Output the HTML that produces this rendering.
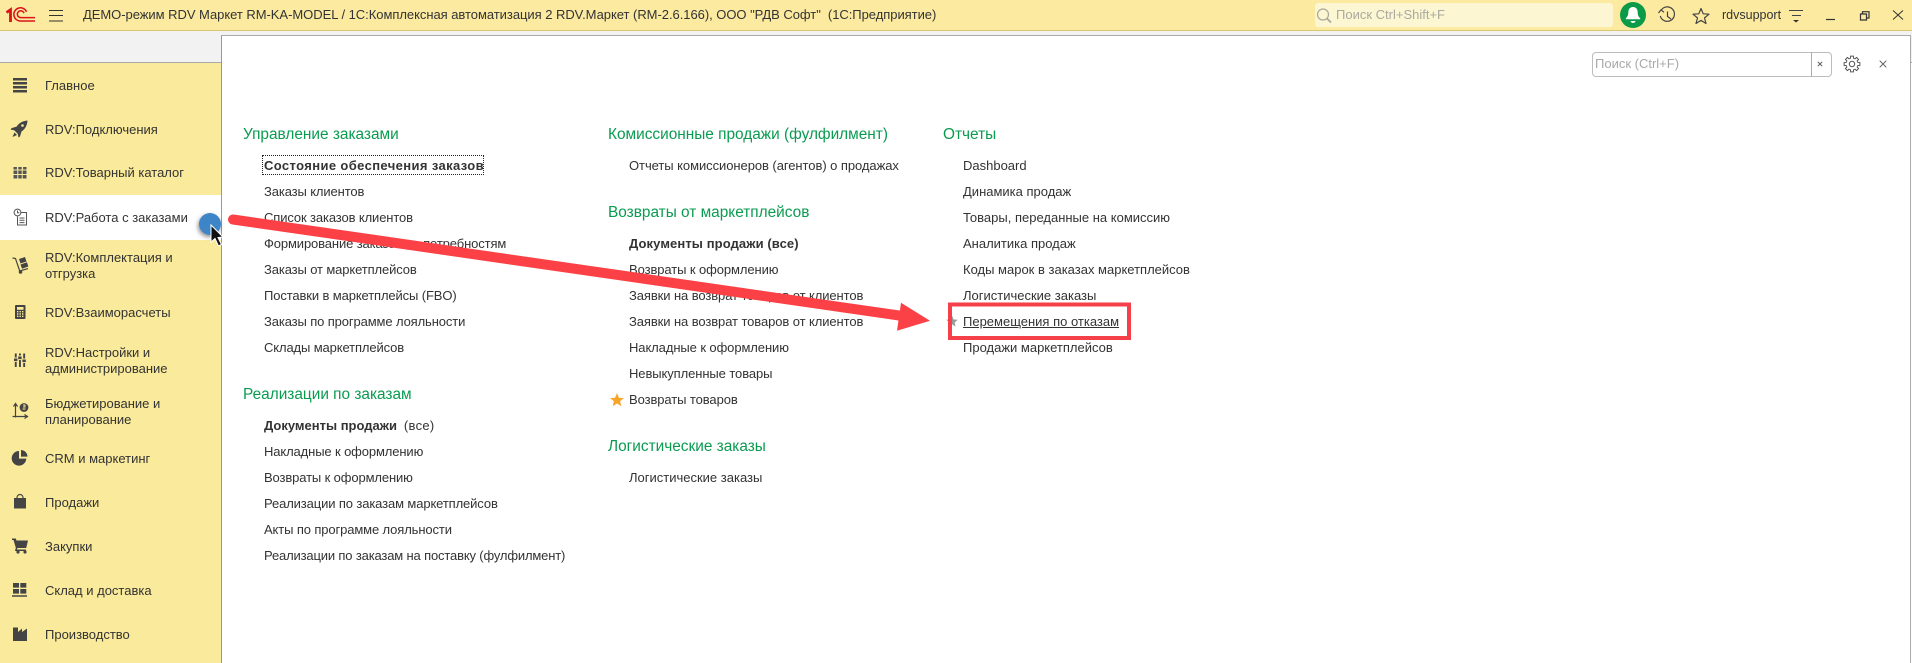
<!DOCTYPE html>
<html lang="ru"><head><meta charset="utf-8"><title>1С</title>
<style>
html,body{margin:0;padding:0;background:#fff}
#r{position:relative;width:1912px;height:663px;overflow:hidden;background:#fff;font-family:"Liberation Sans","Noto Sans CJK SC",sans-serif;font-size:13px;color:#333}
#r div{position:absolute}
.t{position:absolute;height:16px;line-height:16px;white-space:pre}
.h{position:absolute;height:20px;line-height:20px;font-size:15.4px;color:#0a9b50;white-space:pre}
.c1{letter-spacing:-.12px}
.c2{letter-spacing:-.09px}
b{font-weight:bold}
svg{position:absolute;left:0;top:0}
</style></head><body><div id="r">
<div style="left:0;top:0;width:1912px;height:30px;background:#fbea9f;border-bottom:1px solid #d8c76e"></div>
<div style="left:0;top:31px;width:1912px;height:31px;background:#f2f2f2"></div>
<div style="left:0;top:62px;width:221px;height:1px;background:#a8a8a8"></div>
<div style="left:0;top:63px;width:221px;height:600px;background:#faea9b"></div>
<div style="left:0;top:195px;width:221px;height:45px;background:#fff"></div>
<div style="left:221px;top:35px;width:1688px;height:628px;background:#fff;border-left:1px solid #999;border-top:1px solid #aaa;border-right:1px solid #aaa"></div>
<div style="left:1911px;top:62px;width:1px;height:1px;background:#aaa"></div>
<div style="left:1315px;top:3px;width:298px;height:24px;background:#fdf6d2;border-radius:3px"></div>
<div style="left:1592px;top:52px;width:238px;height:23px;border:1px solid #bdbdbd;border-radius:4px;background:#fff"></div>
<div style="left:1811px;top:52px;width:1px;height:25px;background:#adadad"></div>
<div style="left:262px;top:155px;width:220px;height:18px;border:1px dotted #222"></div>

<span class="t" style="left:83px;top:7px;letter-spacing:-.04px">ДЕМО-режим RDV Маркет RM-KA-MODEL / 1С:Комплексная автоматизация 2 RDV.Маркет (RM-2.6.166), ООО "РДВ Софт"  (1С:Предприятие)</span>
<span class="t" style="left:1336px;top:7px;color:#a9a9a0">Поиск Ctrl+Shift+F</span>
<span class="t" style="left:1722px;top:7px;font-size:12.5px">rdvsupport</span>
<span class="t" style="left:1595px;top:56px;color:#a9a9a9">Поиск (Ctrl+F)</span>

<span class="t" style="left:45px;top:78px">Главное</span>
<span class="t" style="left:45px;top:122px">RDV:Подключения</span>
<span class="t" style="left:45px;top:165px">RDV:Товарный каталог</span>
<span class="t" style="left:45px;top:210px">RDV:Работа с заказами</span>
<span class="t" style="left:45px;top:250px">RDV:Комплектация и</span>
<span class="t" style="left:45px;top:266px">отгрузка</span>
<span class="t" style="left:45px;top:305px">RDV:Взаиморасчеты</span>
<span class="t" style="left:45px;top:345px">RDV:Настройки и</span>
<span class="t" style="left:45px;top:361px">администрирование</span>
<span class="t" style="left:45px;top:396px">Бюджетирование и</span>
<span class="t" style="left:45px;top:412px">планирование</span>
<span class="t" style="left:45px;top:451px">CRM и маркетинг</span>
<span class="t" style="left:45px;top:495px">Продажи</span>
<span class="t" style="left:45px;top:539px">Закупки</span>
<span class="t" style="left:45px;top:583px">Склад и доставка</span>
<span class="t" style="left:45px;top:627px">Производство</span>

<span class="h" style="left:243px;top:125px">Управление заказами</span>
<span class="t" style="left:264px;top:158px;letter-spacing:.38px"><b>Состояние обеспечения заказов</b></span>
<span class="t c1" style="left:264px;top:184px">Заказы клиентов</span>
<span class="t c1" style="left:264px;top:210px">Список заказов клиентов</span>
<span class="t c1" style="left:264px;top:236px">Формирование заказов по потребностям</span>
<span class="t c1" style="left:264px;top:262px">Заказы от маркетплейсов</span>
<span class="t c1" style="left:264px;top:288px">Поставки в маркетплейсы (FBO)</span>
<span class="t c1" style="left:264px;top:314px">Заказы по программе лояльности</span>
<span class="t c1" style="left:264px;top:340px">Склады маркетплейсов</span>
<span class="h" style="left:243px;top:385px">Реализации по заказам</span>
<span class="t" style="left:264px;top:418px"><b>Документы продажи</b><span style="margin-left:3px;letter-spacing:.3px"> (все)</span></span>
<span class="t c1" style="left:264px;top:444px">Накладные к оформлению</span>
<span class="t c1" style="left:264px;top:470px">Возвраты к оформлению</span>
<span class="t c1" style="left:264px;top:496px">Реализации по заказам маркетплейсов</span>
<span class="t c1" style="left:264px;top:522px">Акты по программе лояльности</span>
<span class="t" style="left:264px;top:548px;letter-spacing:-.16px">Реализации по заказам на поставку (фулфилмент)</span>

<span class="h" style="left:608px;top:125px">Комиссионные продажи (фулфилмент)</span>
<span class="t" style="left:629px;top:158px;letter-spacing:-.06px">Отчеты комиссионеров (агентов) о продажах</span>
<span class="h" style="left:608px;top:203px">Возвраты от маркетплейсов</span>
<span class="t" style="left:629px;top:236px;letter-spacing:.1px"><b>Документы продажи (все)</b></span>
<span class="t c2" style="left:629px;top:262px">Возвраты к оформлению</span>
<span class="t c2" style="left:629px;top:288px">Заявки на возврат товаров от клиентов</span>
<span class="t c2" style="left:629px;top:314px">Заявки на возврат товаров от клиентов</span>
<span class="t c2" style="left:629px;top:340px">Накладные к оформлению</span>
<span class="t c2" style="left:629px;top:366px">Невыкупленные товары</span>
<span class="t c2" style="left:629px;top:392px">Возвраты товаров</span>
<span class="h" style="left:608px;top:437px">Логистические заказы</span>
<span class="t" style="left:629px;top:470px">Логистические заказы</span>

<span class="h" style="left:943px;top:125px">Отчеты</span>
<span class="t" style="left:963px;top:158px">Dashboard</span>
<span class="t" style="left:963px;top:184px">Динамика продаж</span>
<span class="t" style="left:963px;top:210px">Товары, переданные на комиссию</span>
<span class="t" style="left:963px;top:236px">Аналитика продаж</span>
<span class="t" style="left:963px;top:262px">Коды марок в заказах маркетплейсов</span>
<span class="t" style="left:963px;top:288px">Логистические заказы</span>
<span class="t" style="left:963px;top:314px;text-decoration:underline">Перемещения по отказам</span>
<span class="t" style="left:963px;top:340px">Продажи маркетплейсов</span>

<svg width="1912" height="663" viewBox="0 0 1912 663" fill="none">
<defs>
<filter id="s" x="-40%" y="-40%" width="180%" height="180%"><feDropShadow dx="-1" dy="2" stdDeviation="2" flood-color="#000" flood-opacity=".45"/></filter>
<path id="gt" d="M-2.3 -5.54L-1.55 -5.8L-1.39 -7.88L1.39 -7.88L1.55 -5.8L2.3 -5.54"/>
</defs>
<!-- 1C logo -->
<g stroke="#d9151b" fill="none">
<path d="M6.5 12.5L10.5 9.8V22" stroke-width="2.8"/>
<path d="M26.5 11.8A6.6 6.6 0 1 0 21 21H35" stroke-width="1.5"/>
<path d="M24 13.2A3.4 3.4 0 1 0 21 17.6H35" stroke-width="1.5"/>
</g>
<!-- hamburger -->
<path d="M49 10.5H63M49 15.5H63M49 21H63" stroke="#333" stroke-width="1.1"/>
<!-- search icon -->
<g stroke="#a8a89e" stroke-width="1.2"><circle cx="1323" cy="14.5" r="5.5"/><path d="M1327 18.5L1331 22.5" stroke-width="1.8"/></g>
<!-- bell -->
<circle cx="1633" cy="15" r="13" fill="#0b9a48"/>
<path d="M1633 7c-3.4 0-4.7 2.6-4.7 5.5 0 3.2-1.4 4.7-2.5 5.8v.9h14.4v-.9c-1.1-1.1-2.5-2.6-2.5-5.8 0-2.9-1.3-5.5-4.7-5.5z" fill="#fff"/>
<path d="M1630.5 21h5c-.3 1.4-1.3 2-2.5 2s-2.2-.6-2.5-2z" fill="#fff"/>
<!-- history -->
<g stroke="#444" stroke-width="1.2"><path d="M1661 10.5A7.2 7.2 0 1 1 1660.3 16"/><path d="M1667.5 11.5V16.5L1671 19"/><path d="M1658.5 13L1661 9.8L1664 12.3"/></g>
<!-- star outline -->
<path d="M1701 8.5l2.2 5.3 5.8.4-4.5 3.7 1.5 5.6-5-3.1-5 3.1 1.5-5.6-4.5-3.7 5.8-.4z" stroke="#444" stroke-width="1.2" stroke-linejoin="round"/>
<!-- menu funnel -->
<path d="M1789 10.5H1803M1792 15.5H1801" stroke="#444" stroke-width="1.1"/>
<path d="M1793 20H1799L1796 22.5z" fill="#333"/>
<!-- window controls -->
<path d="M1826 19.5H1835" stroke="#333" stroke-width="1.2"/>
<path d="M1862.5 14V11.7H1869V18H1866.5M1860.5 14H1866.5V20H1860.5z" stroke="#333" stroke-width="1.2"/>
<path d="M1893 10.5L1903 19.5M1903 10.5L1893 19.5" stroke="#333" stroke-width="1"/>
<!-- search clear / gear / close -->
<path d="M1817.8 61.8L1822.2 66.2M1822.2 61.8L1817.8 66.2" stroke="#555" stroke-width="1"/>
<g stroke="#555" stroke-width="1" transform="translate(1852 64)">
<circle r="2.7"/>
<use href="#gt"/><use href="#gt" transform="rotate(45)"/><use href="#gt" transform="rotate(90)"/><use href="#gt" transform="rotate(135)"/><use href="#gt" transform="rotate(180)"/><use href="#gt" transform="rotate(225)"/><use href="#gt" transform="rotate(270)"/><use href="#gt" transform="rotate(315)"/>
</g>
<path d="M1879.7 60.7L1886.3 67.3M1886.3 60.7L1879.7 67.3" stroke="#555" stroke-width=".9"/>

<!-- sidebar icons -->
<g fill="#444">
<path d="M13 78h14v2.5H13zM13 82h14v2.5H13zM13 86h14v2.5H13zM13 90h14v2.5H13z"/>
<!-- rocket -->
<path d="M27.5 120.5c-.3 5-2.3 8.5-6 11l-1.5 5-1.5 1-.7-3.6-3.6-3.6-3.6-.7 1-1.5 5-1.5c2.5-3.7 6-5.7 10.9-6.1z"/>
<path d="M14.5 132.5l2.5 2.5-4.5 2z"/>
<!-- crm pie -->
<path d="M19 451a7.3 7.3 0 107.3 7.6H19z"/><path d="M21 450a6.8 6.8 0 016.5 6.6H21z"/>
<!-- bag -->
<path d="M14 498h12v10.5H14z"/>
<!-- cart -->
<path d="M12 538.5h3.8l.7 2H28l-1.8 7.5H17.4l-.4 1.5h9v1.5H15l.8-3.3L13.5 540H12z"/>
<circle cx="18" cy="552" r="1.6"/><circle cx="25" cy="552" r="1.6"/>
<!-- warehouse -->
<path d="M13 583h6v4.6h-6zM20.3 583h6v4.6h-6zM13 589h6v4.6h-6zM20.3 589h6v4.6h-6zM12 595.3h15v1.4H12z"/>
<!-- factory -->
<path d="M13 641V627.5H18V632L22 628.5V632L27 628.5V641z"/>
<!-- sliders -->
<path d="M14.8 353.5h1.9v4h-1.9zM14 358.5h3.4v2.6H14zM14.8 362h1.9v5h-1.9zM19 353.5h1.9v2h-1.9zM18.2 356.5h3.4v2.6h-3.4zM19 360h1.9v7H19zM23.2 353.5h1.9v5h-1.9zM22.4 359.5h3.4v2.6h-3.4zM23.2 363h1.9v4h-1.9z"/>
<!-- calc -->
<path d="M16 305h8.5a1 1 0 011 1v12a1 1 0 01-1 1H16a1 1 0 01-1-1v-12a1 1 0 011-1z"/>
<!-- hand truck boxes -->
<path d="M19 259l6-2 1.5 4.5-6 2zM20.5 264.5l6.5-2.2 1.3 4.2-6.3 2.2z"/>
</g>
<path d="M17 499v-1.5a3 3 0 016 0V499" stroke="#444" stroke-width="1.2"/>
<!-- rocket window -->
<circle cx="22.5" cy="125.5" r="1.3" fill="#faea9b"/>
<!-- catalog -->
<path d="M13.5 167h3.4v2.5h-3.4zM18.3 167h3.4v2.5h-3.4zM23.1 167h3.4v2.5h-3.4zM13.5 170.5h13v8h-13z" fill="#555"/>
<path d="M13.5 174.5h13M17.8 170.5v8M22.2 170.5v8" stroke="#faea9b" stroke-width="1"/>
<g fill="#faea9b"><path d="M17 307h6.5v2.8H17z"/><path d="M17 311h1.4v1.4H17zM19.5 311h1.4v1.4h-1.4zM22 311h1.4v1.4H22zM17 313.3h1.4v1.4H17zM19.5 313.3h1.4v1.4h-1.4zM22 313.3h1.4v1.4H22zM17 315.6h1.4v1.4H17zM19.5 315.6h1.4v1.4h-1.4zM22 315.6h1.4v1.4H22z"/></g>
<!-- order -->
<g stroke="#555" stroke-width="1"><circle cx="17.5" cy="212.5" r="3.4"/><path d="M17.5 210.5v2.2h1.8"/><path d="M17.5 216.5v8.5h9V212.5h-5.5"/><path d="M19.5 218h5M19.5 220.3h5M19.5 222.6h5"/></g>
<!-- hand truck -->
<g stroke="#444" stroke-width="1.2"><path d="M12.5 258l3 .5 4.2 12.5 8.3-2.4"/></g>
<circle cx="20.5" cy="272" r="1.8" fill="#444"/>
<!-- budget -->
<g stroke="#444" stroke-width="1.2"><path d="M15.5 404V417.5M12.5 416.5H27"/><path d="M13.5 406.5L15.5 403.5L17.5 406.5M24.5 414.5L27.5 416.5L24.5 418.5"/></g>
<circle cx="24" cy="407.5" r="4.4" fill="#444"/><path d="M23 405h2v2h-2M22.5 409h3" stroke="#faea9b" stroke-width=".9"/>
<!-- stars -->
<path d="M952 315.5l1.6 4 4.2.3-3.2 2.7 1 4-3.6-2.2-3.6 2.2 1-4-3.2-2.7 4.2-.3z" fill="#999"/>
<path d="M617 393l1.9 4.7 5 .4-3.8 3.2 1.2 4.9-4.3-2.7-4.3 2.7 1.2-4.9-3.8-3.2 5-.4z" fill="#f9a52b"/>
<!-- annotation -->
<rect x="950" y="304.5" width="179" height="33.5" stroke="#f5404a" stroke-width="4"/>
<path d="M233 219.5L906 316.5" stroke="#fb4145" stroke-width="10" stroke-linecap="round"/>
<path d="M901 302.7L930 320.7L897 330.7z" fill="#fb4145"/>
<circle cx="210" cy="224" r="11" fill="#3d85c6" filter="url(#s)"/>
<path d="M211 225V242L215 238.5L218.5 246L221.5 244.5L218 237.5L223 237z" fill="#111" stroke="#fff" stroke-width="1"/>
</svg>
</div></body></html>
